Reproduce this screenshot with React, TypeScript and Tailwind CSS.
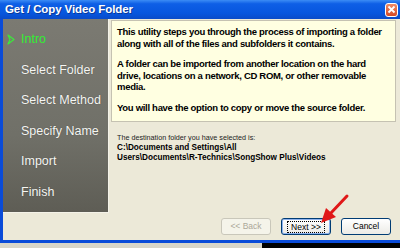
import React from "react";

const steps = ["Select Folder", "Select Method", "Specify Name", "Import", "Finish"];

const App = () => {
  return (
    <div className="w-[400px] h-[248px] overflow-hidden flex flex-col font-['Liberation_Sans',Arial,sans-serif] relative">
      {/* Title bar */}
      <div className="h-[19px] shrink-0 flex items-center justify-between pl-[5px] pr-[2px] bg-[linear-gradient(to_bottom,#3b8cf5_0%,#0e5fe6_20%,#0756de_70%,#0a4bc8_100%)]">
        <span className="text-white text-[11.5px] font-bold tracking-[-0.1px] [text-shadow:1px_1px_0_#0a3a9a]">
          Get / Copy Video Folder
        </span>
        <div className="w-[13px] h-[14px] rounded-[3px] border border-white bg-[linear-gradient(to_bottom,#ef8a66,#d64a25)] flex items-center justify-center">
          <svg width="9" height="9" viewBox="0 0 9 9">
            <path d="M1.5 1.5 L7.5 7.5 M7.5 1.5 L1.5 7.5" stroke="white" strokeWidth="1.8" />
          </svg>
        </div>
      </div>

      {/* Body */}
      <div className="h-[221px] shrink-0 flex border-l-[3px] border-[#0a4bd8] bg-[#ece9d8]">
        {/* Steps panel */}
        <div className="w-[107px] shrink-0">
          <div className="h-[194px] w-[106px] border-r border-b border-[#f4f2e8] bg-[linear-gradient(to_bottom,#7b7a72_0%,#707068_60%,#5e5d55_100%)] flex flex-col pt-[12px]">
            <div className="h-[17px] flex items-center pl-[4px] gap-[6px]">
              <svg width="8" height="11" viewBox="0 0 8 11">
                <path d="M1 1 L7 5.5 L1 10 L3 5.5 Z" fill="none" stroke="#3ce83c" strokeWidth="1.2" strokeLinejoin="round" />
              </svg>
              <span className="text-[#33ee33] text-[12.5px]">Intro</span>
            </div>
            <div className="flex flex-col gap-[13.5px] mt-[13.5px] pl-[18px]">
              {steps.map((s) => (
                <span key={s} className="h-[17px] leading-[17px] text-[#f6f6f2] text-[12.5px] [text-shadow:0_0_1px_#444]">
                  {s}
                </span>
              ))}
            </div>
          </div>
        </div>

        {/* Right column */}
        <div className="flex-1 flex flex-col pl-[1px] pt-[1px]">
          <div className="w-[285px] h-[102px] bg-[#ffffe1] border border-[#c5c2b2] px-[5px] pt-[5px] text-black text-[9.5px] font-bold leading-[11.5px] tracking-[-0.3px]">
            <p>
              This utility steps you through the process of importing a folder along with all of the files and subfolders it contains.
            </p>
            <p className="mt-[9px]">
              A folder can be imported from another location on the hard drive, locations on a network, CD ROM, or other removable media.
            </p>
            <p className="mt-[9px]">You will have the option to copy or move the source folder.</p>
          </div>

          <div className="pl-[6px] pt-[11px] text-black">
            <p className="text-[7.2px] leading-[10px] text-[#222]">The destination folder you have selected is:</p>
            <p className="text-[8.2px] leading-[9.5px] font-bold">
              C:\Documents and Settings\All
              <br />
              Users\Documents\R-Technics\SongShow Plus\Videos
            </p>
          </div>

          <div className="mt-auto mb-[5px] flex justify-end gap-[10px] pr-[9px] text-[8.5px]">
            <button className="w-[50px] h-[17px] rounded-[3px] border border-[#c9c7ba] bg-[#f5f4ea] text-[#aca899]">
              &lt;&lt; Back
            </button>
            <button className="w-[50px] h-[17px] rounded-[3px] border border-[#003c74] bg-[linear-gradient(to_bottom,#ffffff,#ecebe6)] shadow-[inset_0_0_0_1px_#8fb3ee] flex items-center justify-center">
              <span className="border border-dotted border-black px-[3px] leading-[10px]">Next &gt;&gt;</span>
            </button>
            <button className="w-[50px] h-[17px] rounded-[3px] border border-[#003c74] bg-[linear-gradient(to_bottom,#ffffff,#ecebe6)]">
              Cancel
            </button>
          </div>
        </div>
      </div>

      {/* Bottom frame */}
      <div className="h-[3px] shrink-0 bg-[#0a4bd8]" />
      <div className="flex-1 flex">
        <div className="w-[262px] bg-[#d8d5c8]" />
        <div className="flex-1 bg-black" />
      </div>

      {/* Red pointer arrow */}
      <svg className="absolute left-[310px] top-[192px]" width="45" height="40" viewBox="0 0 45 40">
        <path d="M37 4 L20 22" stroke="#e01818" strokeWidth="3" strokeLinecap="round" />
        <path d="M11 31 L16 16 L26 25 Z" fill="#e01818" />
      </svg>
    </div>
  );
};

export default App;
